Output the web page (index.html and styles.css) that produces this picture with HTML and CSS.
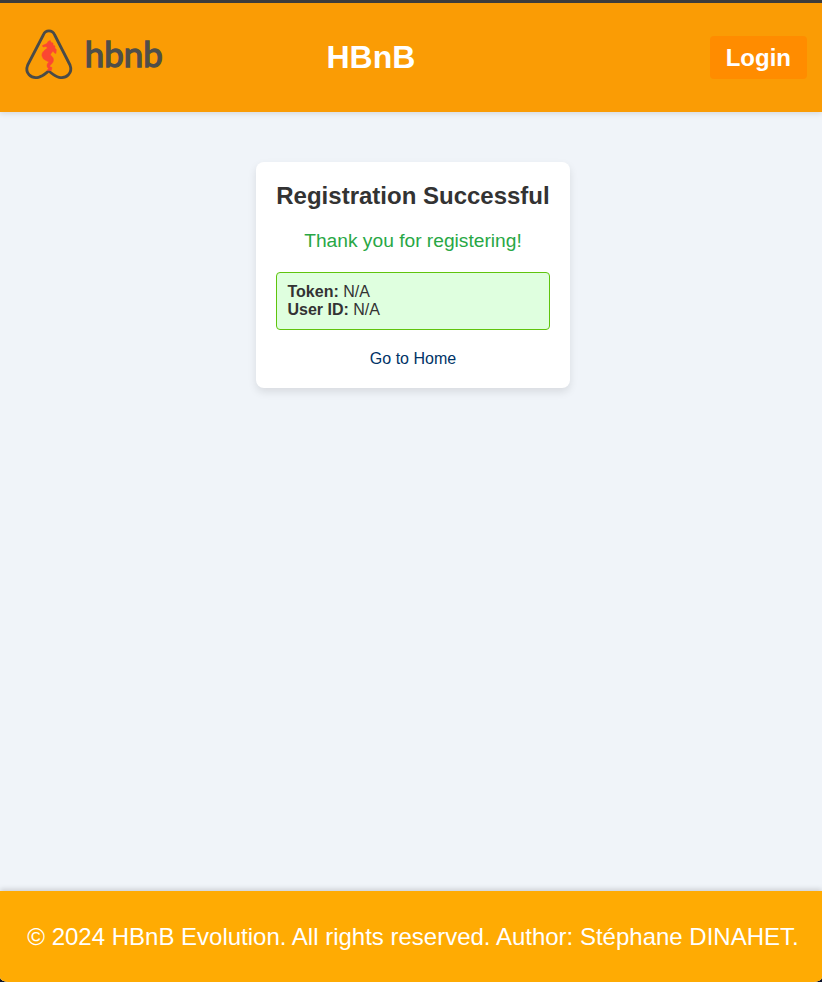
FILE: index.html
```html
<!DOCTYPE html>
<html lang="en">
<head>
<meta charset="utf-8">
<title>HBnB</title>
<link rel="stylesheet" href="styles.css">
</head>
<body>
<div class="page">
  <header class="header">
    <svg class="logo" width="150" height="60" viewBox="0 0 150 60" role="img" aria-label="hbnb">
      <path class="logo-outline" d="M28.300 10 C30.500 4.600 37.300 4.600 39.700 10 L55 40 C58 48 51.500 54 44 52.300 C40 51.500 37 48.500 33.700 46 C30.500 48.500 27.500 51.500 23.500 52.300 C16 54 9.500 48 12.700 40 Z"/>
      <path class="logo-seahorse" d="M27.500 20.500 L32 18.500 L33 16.500 L35.300 15.500 L36 17.500 L38 18 L38 20 L40 21 L39.800 23 L41.300 24.500 L41 28.500 L39.500 28 L38 26 L36.500 28 C35 29.500 35 30 37 31.500 C39.500 34 38.500 37.500 36 39.500 C34 41 34.500 42 37 42.500 L36.300 45.500 L32 45.500 L33.500 43.500 C31 41.500 32 38.500 34 37 L31 35.500 L28.500 34 L27 31 C26.500 27.500 29 25.500 32.500 23 L31 21.500 L28 22 Z"/>
      <text class="logo-text" x="69.700" y="41.700" textLength="78" lengthAdjust="spacingAndGlyphs">hbnb</text>
    </svg>
    <h1 class="title">HBnB</h1>
    <a class="login" href="#">Login</a>
  </header>
  <main class="main">
    <section class="card">
      <h2 class="card-title">Registration Successful</h2>
      <p class="thanks">Thank you for registering!</p>
      <div class="details"><strong>Token:</strong> N/A<br><strong>User ID:</strong> N/A</div>
      <a class="home" href="#">Go to Home</a>
    </section>
  </main>
  <footer class="footer">© 2024 HBnB Evolution. All rights reserved. Author: Stéphane DINAHET.</footer>
</div>
</body>
</html>
```
FILE: styles.css
```css
* { box-sizing: border-box; }
body { margin: 0; background: #10152b; font-family: "Liberation Sans", Arial, sans-serif; color: #333; }
.page { height: 982px; display: flex; flex-direction: column; overflow: hidden; border-top: 3px solid #3c3c3c; border-radius: 0 0 8px 8px / 0 0 5px 5px; background: #f0f4f9; }
.header { height: 109px; flex: none; display: flex; justify-content: space-between; align-items: center; padding: 0 15px; background: #fa9c05; box-shadow: 0 2px 5px rgba(0, 0, 0, .1); }
.logo { display: block; margin-bottom: 5px; }
.logo-outline { fill: none; stroke: #4a4b48; stroke-width: 2.800; stroke-linejoin: round; }
.logo-seahorse { fill: #fb4632; stroke: #fb4632; stroke-width: .5; }
.logo-text { font: 400 34px Lato, sans-serif; fill: #4f4e49; stroke: #4f4e49; stroke-width: 1.300; }
.title { margin: 0 133px 0 0; font-size: 32px; line-height: 37px; color: #fff; }
.login { padding: 8px 16px; border-radius: 4px; background: #ff8c00; color: #fff; font-size: 24px; font-weight: 700; line-height: 27px; text-decoration: none; }
.main { flex: 1; display: flex; justify-content: center; align-items: flex-start; padding-top: 50px; }
.card { width: 314px; height: 226px; margin-left: 4px; padding: 20px; border-radius: 8px; background: #fff; text-align: center; box-shadow: 0 4px 8px rgba(0, 0, 0, .1); }
.card-title { margin: 0 -5px 20px; font-size: 24px; line-height: 28px; white-space: nowrap; }
.thanks { margin: 0 0 20px; font-size: 19.2px; line-height: 22px; color: #28a745; }
.details { height: 58px; padding: 10px 10px 10px 10.500px; margin-bottom: 20px; border: 1px solid #5fc40d; border-radius: 4px; background: #dfffdf; font-size: 16px; line-height: 18px; text-align: left; }
.home { display: block; font-size: 16px; line-height: 18px; color: #003366; text-decoration: none; }
.footer { height: 91px; flex: none; padding-left: 4px; background: #ffab03; box-shadow: 0 -2px 5px rgba(0, 0, 0, .15); color: #fff; text-align: center; font-size: 24px; line-height: 91px; white-space: nowrap; }
```
